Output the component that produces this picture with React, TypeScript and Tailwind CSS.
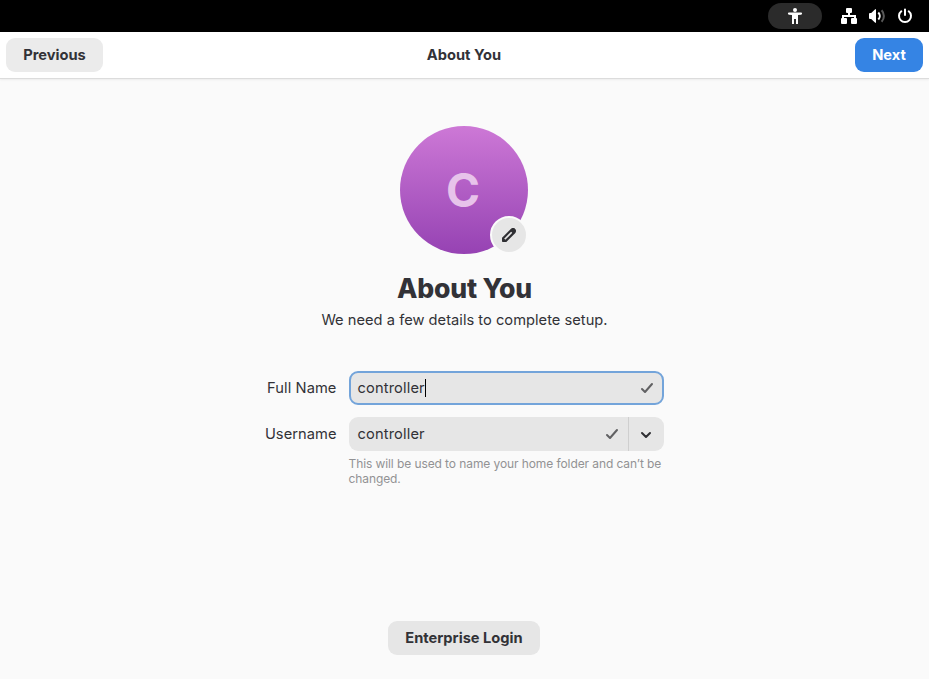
import React from "react";

function TopBar() {
  return (
    <div className="flex h-8 items-center justify-end bg-black pr-4 text-white">
      <div className="mr-[19px] flex h-[26px] w-[54px] items-center justify-center rounded-full bg-[#2b2b2b]">
        <svg width="16" height="16" viewBox="0 0 16 16" fill="currentColor">
          <circle cx="8" cy="2" r="2" />
          <path d="M2 4.500h12a1.100 1.100 0 0 1 0 2.200l-3 .3V16H9v-5H7v5H5V7l-3-.3a1.100 1.100 0 0 1 0-2.200z" />
        </svg>
      </div>
      <svg width="16" height="16" viewBox="0 0 16 16" fill="currentColor">
        <path d="M6 0h4a1 1 0 0 1 1 1v3a1 1 0 0 1-1 1H9v2h6v3a1 1 0 0 1 1 1v4a1 1 0 0 1-1 1h-4a1 1 0 0 1-1-1v-4a1 1 0 0 1 1-1h2V9H3v1h2a1 1 0 0 1 1 1v4a1 1 0 0 1-1 1H1a1 1 0 0 1-1-1v-4a1 1 0 0 1 1-1V7h6V5H6a1 1 0 0 1-1-1V1a1 1 0 0 1 1-1z" />
      </svg>
      <svg className="ml-3" width="16" height="16" viewBox="0 0 16 16" fill="none" stroke="currentColor">
        <path d="M7 1.200v13.600h-.8L2.200 11H1a1 1 0 0 1-1-1V6a1 1 0 0 1 1-1h1.200l4-3.800z" fill="currentColor" stroke="none" />
        <path d="M9.300 4.500a5 5 0 0 1 0 7" strokeWidth="2" />
        <path d="M12.600 2.200a8.500 8.500 0 0 1 0 11.600" strokeWidth="2" opacity=".35" />
      </svg>
      <svg className="ml-3" width="16" height="16" viewBox="0 0 16 16" fill="none" stroke="currentColor" strokeWidth="2" strokeLinecap="round">
        <path d="M8 1.500v5.500M4.300 3.300a6 6 0 1 0 7.400 0" />
      </svg>
    </div>
  );
}

function Check() {
  return (
    <svg width="16" height="16" viewBox="0 0 16 16" fill="none" stroke="#616163" strokeWidth="2" strokeLinecap="round" strokeLinejoin="round">
      <path d="M3 9l3 3 7-8" />
    </svg>
  );
}

export default function App() {
  return (
    <div className="flex h-[679px] w-[929px] flex-col bg-[#fafafa] font-['Inter',sans-serif] text-[14.667px] leading-[18px] text-[#323237]">
      <TopBar />
      <header className="flex h-[47px] items-center justify-between border-b border-[#dcdcdc] bg-white px-1.5 font-bold shadow-[0_1px_2px_rgba(0,0,0,0.06)]">
        <div className="flex flex-1">
          <button className="h-[34px] w-[97px] rounded-[9px] bg-[#ebebeb]">Previous</button>
        </div>
        <div className="mr-px">About You</div>
        <div className="flex flex-1 justify-end">
          <button className="h-[34px] w-[68px] rounded-[9px] bg-[#3584e4] text-white">Next</button>
        </div>
      </header>
      <main className="flex flex-1 flex-col items-center pt-[47px]">
        <div className="relative mr-px flex size-32 items-center justify-center rounded-full bg-linear-to-b from-[#cd78d6] to-[#9642b3]">
          <span className="mr-0.5 text-[46px] font-bold leading-none text-[#e7c3ea]">C</span>
          <button className="absolute right-0 bottom-0 flex size-[38px] items-center justify-center rounded-full border-2 border-[#fafafa] bg-[#e6e6e6]">
            <svg width="16" height="16" viewBox="0 0 16 16" fill="none" stroke="#2f2f33" strokeWidth="2.200" strokeLinejoin="round">
              <path d="M2.100 13.900v-2.700l8.500-8.500a1.900 1.900 0 0 1 2.700 2.700L4.800 13.900z" />
              <path d="M10 3.500l2.500 2.500 1-1a1.700 1.700 0 0 0-2.500-2.500z" fill="#2f2f33" strokeWidth="1.500" />
              <path d="M2 14v-2.500L4.500 14z" fill="#2f2f33" strokeWidth="1.500" />
            </svg>
          </button>
        </div>
        <h1 className="mt-[18px] text-[26.600px] font-extrabold leading-8 tracking-[-0.2px]">About You</h1>
        <p className="mt-[7px] tracking-[0.020px]">We need a few details to complete setup.</p>
        <div className="mt-[42px] mr-px grid w-[399px] grid-cols-[72px_315px] gap-x-3">
          <label className="self-center text-right tracking-[0.080px]">Full Name</label>
          <div className="flex h-[34px] items-center rounded-[9px] border-2 border-[#73a4da] bg-[#e6e6e6] pr-[7px] pl-[7px]">
            <span className="tracking-[0.140px]">controller</span>
            <span className="h-[18px] w-px bg-black" />
            <span className="ml-auto"><Check /></span>
          </div>
          <label className="mt-3 self-center text-right tracking-[0.050px]">Username</label>
          <div className="mt-3 flex h-[34px] items-center rounded-[9px] bg-[#e6e6e6] pl-[9px]">
            <span className="tracking-[0.140px]">controller</span>
            <span className="mr-2 ml-auto"><Check /></span>
            <button className="flex h-full w-9 items-center justify-center border-l border-[#cfcfcf]">
              <svg width="16" height="16" viewBox="0 0 16 16" fill="none" stroke="#2f2f33" strokeWidth="2" strokeLinecap="round" strokeLinejoin="round">
                <path d="M4 7l4 4 4-4" />
              </svg>
            </button>
          </div>
          <p className="col-start-2 mt-[5px] text-[12px] leading-[15px] tracking-[-0.090px] text-[#929294]">
            This will be used to name your home folder and can’t be changed.
          </p>
        </div>
        <button className="mt-auto mr-px mb-6 h-[34px] w-[152px] rounded-[9px] bg-[#e6e6e6] font-bold">Enterprise Login</button>
      </main>
    </div>
  );
}
